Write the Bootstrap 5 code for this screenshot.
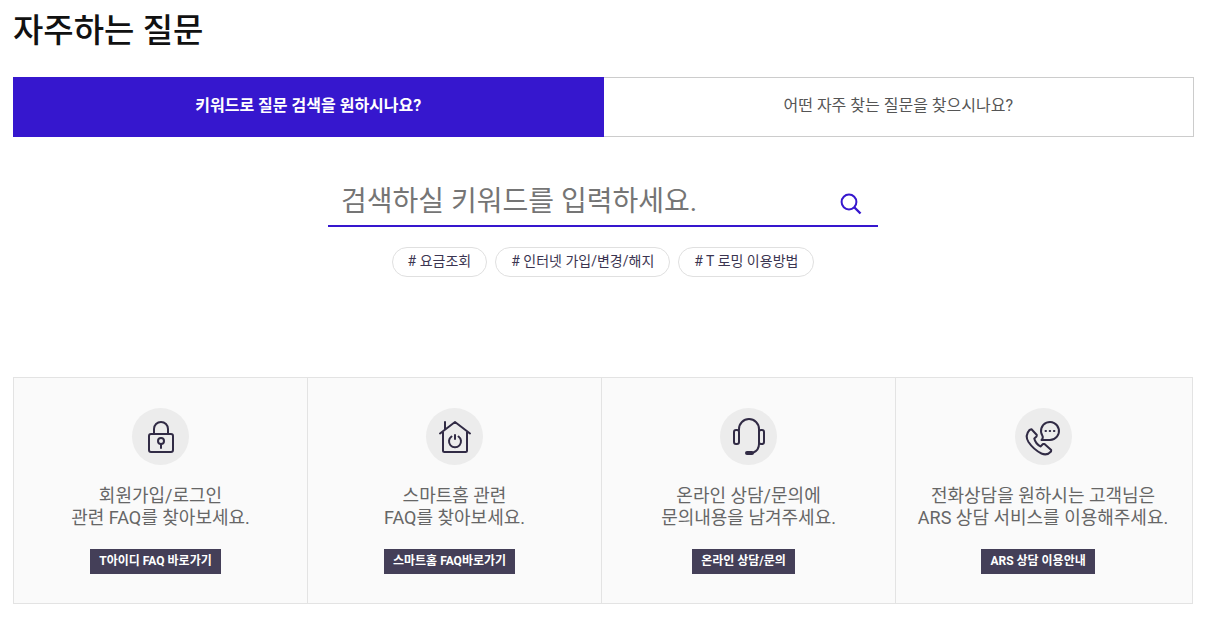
<!DOCTYPE html>
<html lang="ko">
<head>
<meta charset="utf-8">
<meta name="viewport" content="width=device-width, initial-scale=1">
<title>자주하는 질문</title>
<link href="https://cdn.jsdelivr.net/npm/bootstrap@5.3.0/dist/css/bootstrap.min.css" rel="stylesheet">
<style>
  body { font-family: Roboto, "Noto Sans CJK KR", sans-serif; color: #666; padding: 9px 17px 13px 13px; }
  .page-title { font-size: 33px; line-height: 44px; font-weight: 500; color: #111; margin-bottom: 24px; }
  .faq-tabs { margin-right: -1px; }
  .faq-tabs .nav-link { height: 60px; padding: 0 0 2px; border: 1px solid #ccc; border-radius: 0; font-size: 16px; color: #555; background: #fff; }
  .faq-tabs .nav-link.active { background: #3617ce; border-color: #3617ce; color: #fff; font-weight: 700; }
  .search-area { margin: 40px 0 100px; }
  .search-box { max-width: 550px; height: 50px; border-bottom: 2px solid #3617ce; }
  .search-box .form-control { font-size: 28px; line-height: 40px; padding: 2px 13px 0; color: #222; }
  .search-box .form-control::placeholder { color: #757575; }
  .search-box .btn { width: 54px; padding: 5px 0 0; }
  .tag { height: 30px; padding: 0 15px 1px; border: 1px solid #e0e0e0; font-size: 14px; color: #3b3551; }
  .guide { border: 1px solid #e3e3e3; background: #fafafa; }
  .guide-item { flex: 0 0 24.96%; padding: 30px 0 29px; }
  .guide-item:not(:last-child) { border-right: 1px solid #e3e3e3; }
  .guide-item p { font-size: 18px; line-height: 22px; margin: 20px 0; }
  .guide-item .btn { height: 25px; margin-right: 10px; padding: 0 9px; border: 0; font-size: 12px; line-height: 24px; font-weight: 700; color: #fff; background: #443f58; }
  .guide-icon { width: 57px; height: 57px; background: #ececec; }
  .guide-icon svg, .search-box svg { display: block; fill: none; stroke: #312b45; stroke-width: 2; stroke-linejoin: round; stroke-linecap: round; }
  .search-box svg { stroke: #3617ce; stroke-linecap: butt; margin: auto; }
  @media (max-width: 991px) { .guide-item { flex-basis: 50%; } }
</style>
</head>
<body>
<main>
  <h1 class="page-title">자주하는 질문</h1>

  <div class="nav faq-tabs nav-fill flex-nowrap" role="tablist">
    <button class="nav-link active w-50" type="button" role="tab" aria-selected="true">키워드로 질문 검색을 원하시나요?</button>
    <button class="nav-link w-50 border-start-0" type="button" role="tab" aria-selected="false">어떤 자주 찾는 질문을 찾으시나요?</button>
  </div>

  <section class="search-area">
    <form class="search-box d-flex mx-auto" role="search">
      <input class="form-control border-0 shadow-none bg-transparent rounded-0" type="text" placeholder="검색하실 키워드를 입력하세요." aria-label="검색어">
      <button class="btn border-0 flex-shrink-0" type="submit" aria-label="검색">
        <svg width="22" height="22" viewBox="0 0 22 22"><circle cx="9" cy="9" r="7.4"/><path d="M14 14l6.500 6.500" stroke-width="2.4"/></svg>
      </button>
    </form>
    <div class="d-flex flex-wrap justify-content-center gap-2 mt-3 pt-1">
      <a class="tag d-flex align-items-center rounded-pill text-decoration-none" href="#"># 요금조회</a>
      <a class="tag d-flex align-items-center rounded-pill text-decoration-none" href="#"># 인터넷 가입/변경/해지</a>
      <a class="tag d-flex align-items-center rounded-pill text-decoration-none" href="#"># T 로밍 이용방법</a>
    </div>
  </section>

  <section class="guide d-flex flex-wrap text-center">
    <div class="guide-item">
      <div class="guide-icon rounded-circle mx-auto">
        <svg width="57" height="57" viewBox="0 0 57 57"><rect x="17" y="26" width="24" height="18" rx="2"/><path d="M22 26v-5a7 7 0 0 1 14 0v5M29 36v4"/><circle cx="29" cy="33" r="3"/></svg>
      </div>
      <p>회원가입/로그인<br>관련 FAQ를 찾아보세요.</p>
      <a class="btn rounded-0" href="#">T아이디 FAQ 바로가기</a>
    </div>
    <div class="guide-item">
      <div class="guide-icon rounded-circle mx-auto">
        <svg width="57" height="57" viewBox="0 0 57 57"><path d="M14 25.500L29 14l15 11.500M19 21v-7M17 24v18.500q0 1.500 1.500 1.500h21q1.500 0 1.500-1.500V24M29 27v4M25.500 28.500a6 6 0 1 0 7 0"/></svg>
      </div>
      <p>스마트홈 관련<br>FAQ를 찾아보세요.</p>
      <a class="btn rounded-0" href="#">스마트홈 FAQ바로가기</a>
    </div>
    <div class="guide-item">
      <div class="guide-icon rounded-circle mx-auto">
        <svg width="57" height="57" viewBox="0 0 57 57"><rect x="14" y="22" width="5" height="14" rx="2"/><rect x="39" y="22" width="5" height="14" rx="2"/><path d="M19 22v-1a10 10 0 0 1 20 0v15q0 6-5.500 8.500"/><rect x="26" y="44" width="7" height="2" rx="1"/></svg>
      </div>
      <p>온라인 상담/문의에<br>문의내용을 남겨주세요.</p>
      <a class="btn rounded-0" href="#">온라인 상담/문의</a>
    </div>
    <div class="guide-item">
      <div class="guide-icon rounded-circle mx-auto">
        <svg width="57" height="57" viewBox="0 0 57 57"><path d="M26.500 32H35a9 9 0 1 0-7.500-4q1 2-1 4z"/><path d="M30.500 23h.5M34.700 23h.5M38.900 23h.5"/><path d="M14.500 22l2-.7 5.300 5.700-.3 1.500-2.200 2q1 5 6.200 8l2.500-2.500h1.500l6.700 6-.2 1.500q-4 4.500-9.500 2-8-4-13-11.500-4-6.500 1-12z"/></svg>
      </div>
      <p>전화상담을 원하시는 고객님은<br>ARS 상담 서비스를 이용해주세요.</p>
      <a class="btn rounded-0" href="#">ARS 상담 이용안내</a>
    </div>
  </section>
</main>
<script src="https://cdn.jsdelivr.net/npm/bootstrap@5.3.0/dist/js/bootstrap.bundle.min.js"></script>
</body>
</html>
